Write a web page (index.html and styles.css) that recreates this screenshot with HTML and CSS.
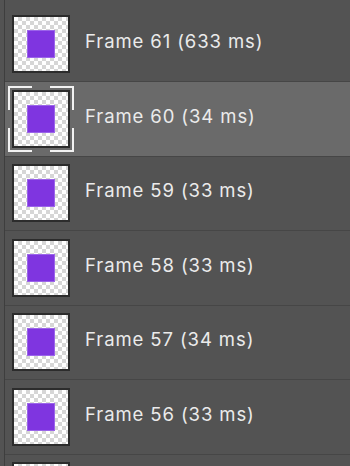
FILE: index.html
```html
<!DOCTYPE html>
<html lang="en">
<head>
    <meta charset="UTF-8">
    <meta name="viewport" content="width=device-width, initial-scale=1.0">
    <title>Frames</title>
    <link rel="stylesheet" href="styles.css">
</head>
<body>

    <div class="frames">
        <div class="frame">
            <div class="thumb"><span class="swatch"></span></div>
            <span class="label">Frame 61 (633 ms)</span>
        </div>
        <div class="frame selected">
            <div class="thumb">
                <span class="swatch"></span>
                <span class="corner tl"></span>
                <span class="corner tr"></span>
                <span class="corner bl"></span>
                <span class="corner br"></span>
            </div>
            <span class="label">Frame 60 (34 ms)</span>
        </div>
        <div class="frame">
            <div class="thumb"><span class="swatch"></span></div>
            <span class="label">Frame 59 (33 ms)</span>
        </div>
        <div class="frame">
            <div class="thumb"><span class="swatch"></span></div>
            <span class="label">Frame 58 (33 ms)</span>
        </div>
        <div class="frame">
            <div class="thumb"><span class="swatch"></span></div>
            <span class="label">Frame 57 (34 ms)</span>
        </div>
        <div class="frame">
            <div class="thumb"><span class="swatch"></span></div>
            <span class="label">Frame 56 (33 ms)</span>
        </div>
        <div class="frame">
            <div class="thumb"><span class="swatch"></span></div>
        </div>
    </div>

</body>
</html>
```

FILE: styles.css
```css
body {
    margin: 0;
    background: #535353;
    font-family: Inter, "Noto Sans", sans-serif;
    overflow: hidden;
}

.frames {
    margin-left: 4px;
    padding-top: 7.5px;
    border-left: 1px solid #3e3e3e;
    min-height: 466px;
}

.frame {
    display: flex;
    align-items: center;
    padding: 7.5px 0 8px 7px;
    border-bottom: 1px solid #464646;
}

.frame.selected {
    background: #6a6a6a;
}

.thumb {
    position: relative;
    width: 54px;
    height: 54px;
    border: 2px solid #2c2c2c;
    flex-shrink: 0;
    display: flex;
    align-items: center;
    justify-content: center;
    background-color: #ffffff;
    background-image:
        linear-gradient(45deg, #d6d6d6 25%, transparent 25%, transparent 75%, #d6d6d6 75%),
        linear-gradient(45deg, #d6d6d6 25%, transparent 25%, transparent 75%, #d6d6d6 75%);
    background-size: 8px 8px;
    background-position: 0 0, 4px 4px;
}

.swatch {
    width: 26px;
    height: 26px;
    background: #7f35e0;
    border: 1px solid #9b64ea;
}

.label {
    margin-left: 15px;
    margin-top: -6px;
    font-size: 18.5px;
    color: #ebebeb;
    letter-spacing: 0.9px;
}

.corner {
    position: absolute;
    width: 22px;
    height: 22px;
    border: 0 solid #f2f2f2;
}

.corner.tl {
    top: -6px;
    left: -6px;
    border-top-width: 2px;
    border-left-width: 2px;
}

.corner.tr {
    top: -6px;
    right: -6px;
    border-top-width: 2px;
    border-right-width: 2px;
}

.corner.bl {
    bottom: -6px;
    left: -6px;
    border-bottom-width: 2px;
    border-left-width: 2px;
}

.corner.br {
    bottom: -6px;
    right: -6px;
    border-bottom-width: 2px;
    border-right-width: 2px;
}
```
